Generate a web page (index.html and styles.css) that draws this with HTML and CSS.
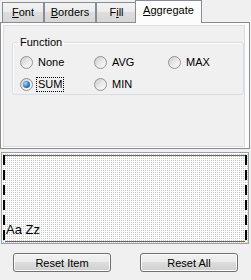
FILE: index.html
```html
<!DOCTYPE html>
<html lang="en">
<head>
  <meta charset="UTF-8">
  <title>Aggregate</title>
  <link rel="stylesheet" href="styles.css">
</head>
<body>
  <div class="tab-strip">
    <div class="tab tab-font"><u>F</u>ont</div>
    <div class="tab tab-borders"><u>B</u>orders</div>
    <div class="tab tab-fill">F<u>i</u>ll</div>
    <div class="tab tab-aggregate active"><u>A</u>ggregate</div>
  </div>

  <div class="tab-page">
    <div class="inner-panel">
      <fieldset class="group">
        <legend>Function</legend>
        <div class="radio-grid">
          <label class="radio"><span class="dot"></span><span class="caption">None</span></label>
          <label class="radio"><span class="dot"></span><span class="caption">AVG</span></label>
          <label class="radio"><span class="dot"></span><span class="caption">MAX</span></label>
          <label class="radio checked"><span class="dot"></span><span class="caption focus">SUM</span></label>
          <label class="radio"><span class="dot"></span><span class="caption">MIN</span></label>
        </div>
      </fieldset>
    </div>
  </div>

  <!-- preview -->
  <div class="preview">
    <div class="dash"></div>
    <div class="sample-area">
      <span class="sample">Aa Zz</span>
    </div>
    <div class="dash"></div>
  </div>

  <div class="buttons">
    <button class="btn">Reset Item</button>
    <button class="btn">Reset All</button>
  </div>
</body>
</html>
```

FILE: styles.css
```css
body {
  margin: 0;
  width: 251px;
  height: 280px;
  background-color: #f0f0f0;
  font-family: "Liberation Sans", Arial, sans-serif;
  font-size: 11px;
  color: #000;
  overflow: hidden;
}
.tab-strip {
  display: flex;
  align-items: flex-end;
  height: 22px;
  padding-left: 2px;
}
.tab {
  box-sizing: border-box;
  height: 20px;
  line-height: 18px;
  text-align: center;
  border: 1px solid #898c95;
  border-bottom: none;
  background: linear-gradient(#f3f3f3, #ebebeb 50%, #dddddd 50%, #d6d6d6);
}
.tab-font {
  width: 42px;
}
.tab-borders {
  width: 52px;
}
.tab-fill {
  width: 41px;
}
.tab-aggregate {
  width: 67px;
}
.tab.active {
  position: relative;
  z-index: 1;
  height: 23px;
  margin-left: -2px;
  margin-bottom: -1px;
  line-height: 18px;
  background: #fcfcfc;
}
.tab-page {
  box-sizing: border-box;
  width: 250px;
  height: 127px;
  border: 1px solid #898c95;
  background-color: #fcfcfc;
  padding: 2px 4px 1px 2px;
}
.inner-panel {
  box-sizing: border-box;
  height: 122px;
  border: 1px solid #dcdcdc;
  background-color: #f0f0f0;
  padding: 0 0 0 8px;
  overflow: hidden;
}
.group {
  box-sizing: border-box;
  width: 232px;
  margin: 10px 0 0 0;
  padding: 0 0 0 5px;
  border: 1px solid #d5dfe5;
  border-radius: 3px;
  box-shadow: inset 1px 1px 0 #fff;
}
.group legend {
  padding: 0 2px;
  line-height: 13px;
}
.radio-grid {
  display: grid;
  grid-template-columns: 74px 74px auto;
  grid-auto-rows: 20px;
  row-gap: 2px;
  margin: 3px 0 0 2px;
}
.radio {
  display: flex;
  align-items: center;
  gap: 3px;
}
.dot {
  box-sizing: border-box;
  width: 13px;
  height: 13px;
  border-radius: 50%;
  border: 1px solid #939393;
  background: linear-gradient(135deg, #cbcbcb, #eeeeee 60%, #fbfbfb);
  display: flex;
  align-items: center;
  justify-content: center;
}
.radio.checked .dot::after {
  content: "";
  width: 7px;
  height: 7px;
  border-radius: 50%;
  background: radial-gradient(circle at 35% 35%, #9fdcff, #2c78c0 55%, #15467e);
}
.caption {
  line-height: 13px;
  padding: 0 1px;
  border: 1px solid transparent;
}
.caption.focus {
  border: 1px dotted #000;
}
.preview {
  box-sizing: border-box;
  display: flex;
  width: 248px;
  height: 92px;
  margin: 3px 0 0 1px;
  border: 1px solid #a0a0a0;
  padding: 2px 1px 1px 1px;
  background-color: #c8c8c8;
  background-image:
    linear-gradient(to right, #fff 1px, transparent 1px),
    linear-gradient(#fff 1px, transparent 1px);
  background-size: 2px 2px;
}
.dash {
  width: 2px;
  background: repeating-linear-gradient(#000 0 10px, transparent 10px 15px);
}
.sample-area {
  flex: 1;
  display: flex;
  align-items: flex-end;
  border-top: 1px solid #a0522d;
  border-bottom: 1px solid #a0522d;
  padding: 0 0 4px 1px;
}
.sample {
  font-size: 13px;
  line-height: 15px;
}
.buttons {
  display: flex;
  gap: 29px;
  padding: 9px 0 0 13px;
}
.btn {
  box-sizing: border-box;
  width: 98px;
  height: 19px;
  padding: 0;
  font-family: "Liberation Sans", Arial, sans-serif;
  font-size: 11px;
  color: #000;
  border: 1px solid #707070;
  border-radius: 3px;
  background: linear-gradient(#f2f2f2, #ebebeb 50%, #dddddd 50%, #cfcfcf);
  box-shadow: inset 0 0 0 1px #fbfbfb;
}
```
